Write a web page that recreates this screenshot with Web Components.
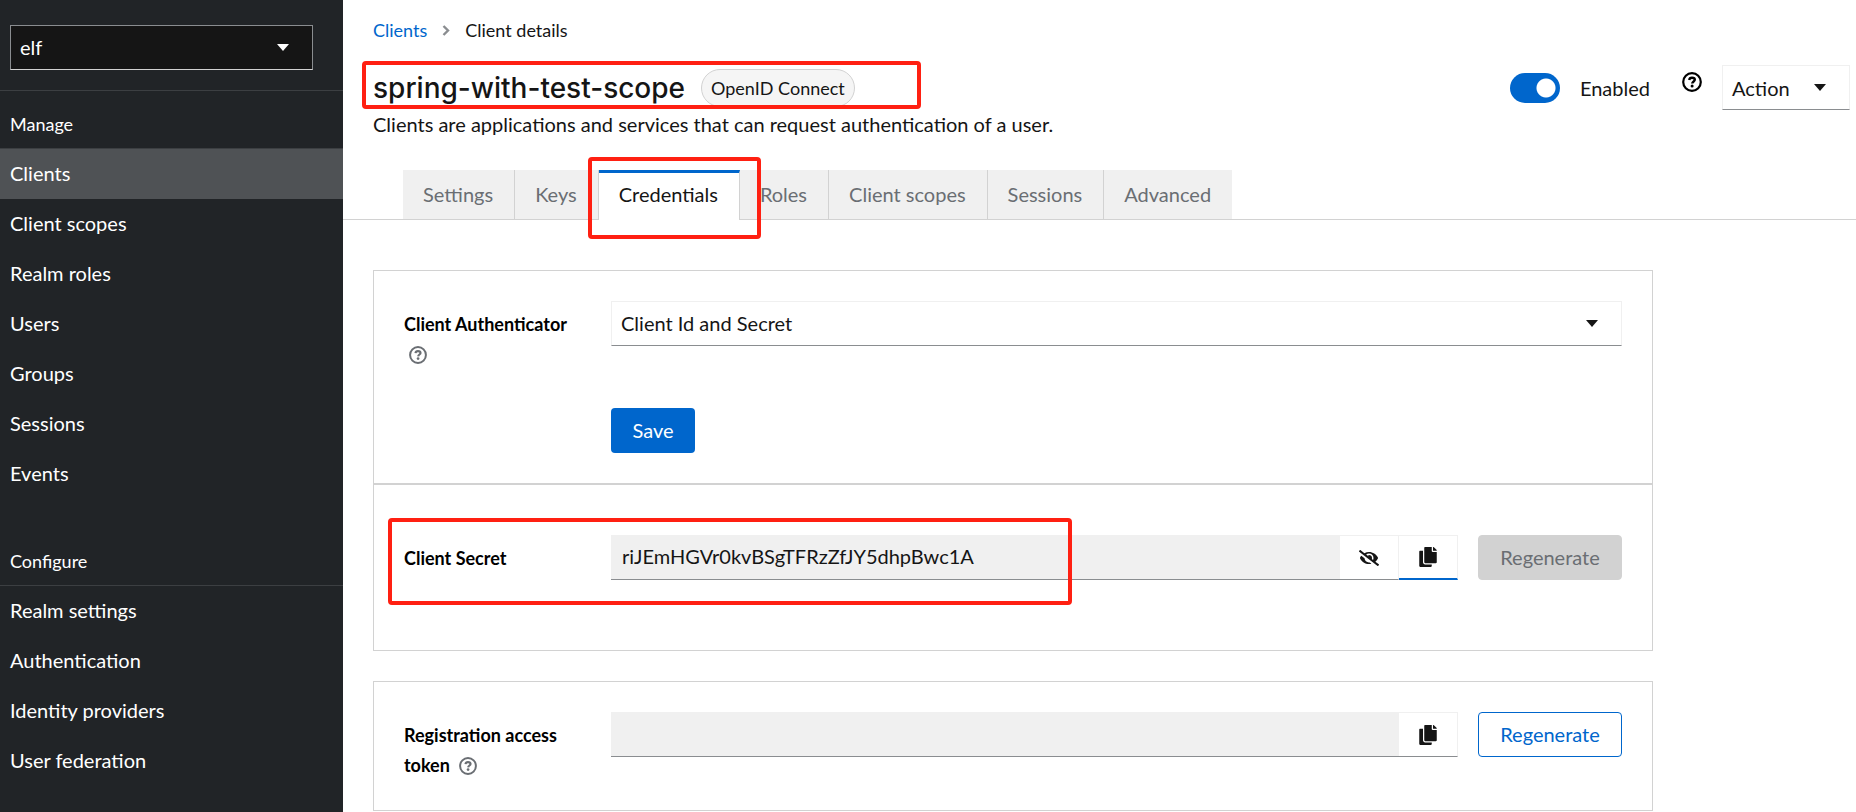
<!DOCTYPE html>
<html lang="en">
<head>
<meta charset="utf-8">
<meta name="viewport" content="width=device-width, initial-scale=1">
<title>Client details</title>
<style>
  body {
    margin: 0;
    background: #fff;
    color: #151515;
    font: 400 20px/30px Lato, "Open Sans", sans-serif;
  }
</style>
</head>
<body>
<admin-app></admin-app>

<template id="t-admin-app">
  <style>
    :host { display: grid; grid-template-columns: 343px minmax(0, 1fr); min-height: 100vh; }
    main { padding-top: 15px; min-width: 0; }
    .panels { padding: 50px 30px 0; max-width: 1280px; }
    .panels detail-card:last-child { margin-top: 30px; }
  </style>
  <admin-sidebar></admin-sidebar>
  <main>
    <client-header></client-header>
    <client-tabs></client-tabs>
    <div class="panels">
      <detail-card><authenticator-form></authenticator-form></detail-card>
      <detail-card roomy>
        <secret-field label="Client Secret" value="riJEmHGVr0kvBSgTFRzZfJY5dhpBwc1A" maskable copied disabled marked></secret-field>
      </detail-card>
      <detail-card>
        <secret-field label="Registration access token" help></secret-field>
      </detail-card>
    </div>
  </main>
</template>

<template id="t-admin-sidebar">
  <style>
    :host { display: block; background: #212427; color: #fff; }
    .realm { padding: 25px 30px 20px 10px; border-bottom: 1px solid #3c3f42; }
    .picker { position: relative; display: block; }
    select {
      appearance: none; display: block; box-sizing: border-box; width: 100%; height: 45px; margin: 0;
      padding: 0 9px 2px; font: inherit; color: #fff; background: #151515;
      border: 1px solid #8a8d90; border-bottom-color: #d2d2d2; border-radius: 0;
    }
    ui-icon { position: absolute; right: 24px; top: 19px; pointer-events: none; }
  </style>
  <div class="realm">
    <div class="picker">
      <select aria-label="Realm"><option>elf</option></select>
      <ui-icon name="caret"></ui-icon>
    </div>
  </div>
  <nav-section heading="Manage" items="Clients|Client scopes|Realm roles|Users|Groups|Sessions|Events" current="Clients"></nav-section>
  <nav-section heading="Configure" items="Realm settings|Authentication|Identity providers|User federation" spaced></nav-section>
</template>

<template id="t-nav-section">
  <style>
    :host { display: block; }
    :host([spaced]) { padding-top: 29px; }
    h2 {
      margin: 0; padding: 18px 10px 9px; font-size: 18px; line-height: 30px; font-weight: 400;
      border-bottom: 1px solid #3c3f42;
    }
    ul { list-style: none; margin: 0; padding: 0; }
    a { display: block; padding: 9px 10px 11px; color: #fff; text-decoration: none; }
    a[aria-current] { background: #4f5255; }
  </style>
  <h2></h2>
  <ul></ul>
</template>

<template id="t-client-header">
  <style>
    :host { display: block; padding: 0 6px 0 30px; }
    nav { display: flex; align-items: center; font-size: 18px; line-height: 30px; color: #151515; }
    nav a { color: #06c; text-decoration: none; }
    nav ui-icon { margin: 0 15px; }
    .top { display: flex; align-items: center; height: 45px; margin-top: 20px; }
    .title { position: relative; display: flex; align-items: center; gap: 16px; }
    h1 { margin: 0; font: 500 28px/36px Inter, Lato, sans-serif; }
    .chip {
      box-sizing: border-box; height: 38px; padding: 0 9px; font-size: 18px; line-height: 36px;
      border: 1px solid #d2d2d2; border-radius: 19px; background: #f5f5f5;
    }
    .tools { display: flex; align-items: center; margin-left: auto; }
    .switch { display: flex; align-items: center; gap: 20px; }
    .switch input {
      appearance: none; margin: 0; width: 50px; height: 30px; border-radius: 15px;
      background: radial-gradient(circle at 36px 15px, #fff 9px, transparent 10px) #06c;
    }
    .help { display: flex; margin: 0 20px 12px 32px; padding: 0; border: 0; background: none; color: #000; }
    .action {
      display: flex; align-items: center; justify-content: space-between; box-sizing: border-box;
      width: 128px; height: 45px; padding: 0 23px 0 9px; font: inherit; color: #151515;
      background: #fff; border: 1px solid #f0f0f0; border-bottom-color: #8a8d90;
    }
    p { margin: 0; line-height: 28px; }
  </style>
  <nav aria-label="Breadcrumb"><a href="#clients">Clients</a><ui-icon name="chevron"></ui-icon><span>Client details</span></nav>
  <div class="top">
    <div class="title">
      <h1>spring-with-test-scope</h1><span class="chip">OpenID Connect</span>
      <red-frame style="inset: -8px -66px -2px -11px"></red-frame>
    </div>
    <div class="tools">
      <label class="switch"><input type="checkbox" role="switch" checked>Enabled</label>
      <button class="help" type="button" aria-label="Help for enabled"><ui-icon name="help" large></ui-icon></button>
      <button class="action" type="button">Action<ui-icon name="caret"></ui-icon></button>
    </div>
  </div>
  <p>Clients are applications and services that can request authentication of a user.</p>
</template>

<template id="t-client-tabs">
  <style>
    :host { display: block; margin-top: 32px; padding-left: 60px; border-bottom: 1px solid #d2d2d2; }
    ul { display: flex; list-style: none; margin: 0; padding: 0; }
    li { position: relative; }
    a {
      display: block; box-sizing: border-box; height: 49px; padding: 9px 21px 10px 20px; color: #6a6e73;
      background: #f0f0f0; border-right: 1px solid #d2d2d2; text-decoration: none;
    }
    li:last-child a { border-right: 0; }
    a[aria-current] {
      height: 50px; margin-bottom: -1px; padding-top: 6px; color: #151515; background: #fff;
      border-top: 3px solid #06c;
    }
    li:has([aria-current]) { z-index: 1; }
  </style>
  <ul>
    <li><a href="#settings">Settings</a></li>
    <li><a href="#keys">Keys</a></li>
    <li><a href="#credentials" aria-current="page">Credentials</a><red-frame style="inset: -13px -21px -20px -11px"></red-frame></li>
    <li><a href="#roles">Roles</a></li>
    <li><a href="#scopes">Client scopes</a></li>
    <li><a href="#sessions">Sessions</a></li>
    <li><a href="#advanced">Advanced</a></li>
  </ul>
</template>

<template id="t-detail-card">
  <style>
    :host { display: block; padding: 30px; border: 1px solid #d2d2d2; background: #fff; }
    :host([roomy]) { padding: 50px 30px 47px; }
  </style>
  <slot></slot>
</template>

<template id="t-authenticator-form">
  <style>
    :host { display: block; }
    form { display: grid; grid-template-columns: 177px minmax(0, 1fr); column-gap: 30px; row-gap: 39px; }
    .label { padding-top: 8px; font-size: 18px; font-weight: 700; color: #000; }
    .label button { display: inline-flex; margin: 0 5px; padding: 0 0 2px; border: 0; background: none; color: #6a6e73; vertical-align: middle; }
    .picker { position: relative; }
    select {
      appearance: none; display: block; box-sizing: border-box; width: 100%; height: 45px; margin: 0;
      padding: 0 9px 2px; font: inherit; color: #151515; background: #fff;
      border: 1px solid #f0f0f0; border-bottom-color: #8a8d90; border-radius: 0;
    }
    .picker ui-icon { position: absolute; right: 24px; top: 19px; pointer-events: none; }
    .save {
      grid-column: 2; justify-self: start; width: 84px; height: 45px; padding: 0 0 2px; font: inherit;
      color: #fff; background: #06c; border: 0; border-radius: 4px;
    }
  </style>
  <form>
    <div class="label"><label for="auth">Client Authenticator</label> <button type="button" aria-label="Help"><ui-icon name="help"></ui-icon></button></div>
    <div class="picker">
      <select id="auth"><option>Client Id and Secret</option></select>
      <ui-icon name="caret"></ui-icon>
    </div>
    <button class="save" type="button">Save</button>
  </form>
</template>

<template id="t-secret-field">
  <style>
    :host { display: grid; grid-template-columns: 177px minmax(0, 1fr) 144px; column-gap: 30px; position: relative; }
    .label { padding-top: 8px; min-height: 60px; font-size: 18px; font-weight: 700; color: #000; }
    .label button { display: inline-flex; margin: 0 5px; padding: 0 0 2px; border: 0; background: none; color: #6a6e73; vertical-align: middle; }
    .group { display: flex; height: 45px; margin-right: -10px; }
    input {
      flex: 1; min-width: 0; box-sizing: border-box; margin: 0; padding: 0 11px 2px; font: inherit;
      color: #151515; background: #f0f0f0; border: 0; border-bottom: 1px solid #8a8d90; border-radius: 0;
    }
    .group button {
      display: flex; align-items: center; justify-content: center; box-sizing: border-box; width: 59px;
      padding: 0; color: #151515; background: #fff; border: 1px solid #f0f0f0; border-left: 0;
      border-bottom-color: #8a8d90;
    }
    .group button.copied { border-bottom: 2px solid #06c; }
    .regenerate {
      box-sizing: border-box; height: 45px; padding: 0 0 2px; font: inherit; color: #06c; background: #fff;
      border: 1px solid #06c; border-radius: 4px;
    }
    .regenerate:disabled { color: #6a6e73; background: #d2d2d2; border-color: #d2d2d2; }
  </style>
  <div class="label"><label for="value"></label></div>
  <div class="group"><input id="value" type="text" readonly></div>
  <button class="regenerate" type="button">Regenerate</button>
</template>

<template id="t-red-frame">
  <style>
    :host { position: absolute; z-index: 2; border: 4px solid #ff2012; border-radius: 4px; pointer-events: none; }
  </style>
</template>

<script>
  const ICONS = {
    caret: [12, 7, '<path d="M0 0h12L6 7z" fill="currentColor"/>', '0 0 12 7'],
    chevron: [8, 11, '<path d="M1.5 1l4.5 4.5L1.5 10" fill="none" stroke="#8a8d90" stroke-width="2.4"/>', '0 0 8 11'],
    help: [18, 18, '<circle cx="10" cy="10" r="8.8" fill="none" stroke="currentColor" stroke-width="2.2"/><path d="M7.2 8C7.4 6.3 8.5 5.7 10 5.7c1.6 0 2.8.8 2.8 2.1 0 1.6-2.4 1.7-2.6 3.7" fill="none" stroke="currentColor" stroke-width="2.4"/><circle cx="10.1" cy="14" r="1.5" fill="currentColor"/>', '0 0 20 20'],
    copy: [18, 20, '<path fill="currentColor" d="M320 448v40c0 13.255-10.745 24-24 24H24c-13.255 0-24-10.745-24-24V120c0-13.255 10.745-24 24-24h72v296c0 30.879 25.121 56 56 56h168zm0-344V0H152c-13.255 0-24 10.745-24 24v368c0 13.255 10.745 24 24 24h272c13.255 0 24-10.745 24-24V128H344c-13.2 0-24-10.8-24-24zm120.971-31.029L375.029 7.029A24 24 0 0 0 358.059 0H352v96h96v-6.059a24 24 0 0 0-7.029-16.97z"/>', '0 0 448 512'],
    hide: [20, 16, '<path fill="currentColor" d="M320 400c-75.85 0-137.25-58.71-142.9-133.11L72.2 185.82c-13.79 17.3-26.48 35.59-36.72 55.59a32.35 32.35 0 0 0 0 29.19C89.71 376.41 197.07 448 320 448c26.91 0 52.87-4 77.89-10.46L346 397.39a144.13 144.13 0 0 1-26 2.61zm313.82 58.1l-110.55-85.44a331.25 331.25 0 0 0 81.25-102.07 32.35 32.35 0 0 0 0-29.19C550.29 135.59 442.93 64 320 64a308.15 308.15 0 0 0-147.32 37.7L45.46 3.37A16 16 0 0 0 23 6.18L3.37 31.45A16 16 0 0 0 6.18 53.9l588.36 454.73a16 16 0 0 0 22.46-2.81l19.64-25.27a16 16 0 0 0-2.82-22.45zm-183.72-142l-39.3-30.38A94.75 94.75 0 0 0 416 256a94.76 94.76 0 0 0-121.31-92.21A47.65 47.65 0 0 1 304 192a46.64 46.64 0 0 1-1.54 10l-73.61-56.89A142.31 142.31 0 0 1 320 112a143.92 143.92 0 0 1 144 144c0 21.63-5.29 41.79-13.9 60.11z"/>', '0 0 640 512'],
  };

  class UiIcon extends HTMLElement {
    constructor() { super(); this.attachShadow({ mode: 'open' }); }
    connectedCallback() {
      const [w, h, body, box] = ICONS[this.getAttribute('name')];
      const grow = this.hasAttribute('large') ? 2 : 0;
      this.shadowRoot.innerHTML = `<style>:host { display: inline-flex; } svg { display: block; }</style>
        <svg width="${w + grow}" height="${h + grow}" viewBox="${box}" aria-hidden="true">${body}</svg>`;
    }
  }
  customElements.define('ui-icon', UiIcon);

  /* Base class: clones the template named after the tag into the shadow root. */
  class TemplateElement extends HTMLElement {
    constructor() {
      super();
      const template = document.getElementById('t-' + this.localName);
      this.attachShadow({ mode: 'open' }).append(template.content.cloneNode(true));
    }
  }

  class NavSection extends TemplateElement {
    connectedCallback() {
      this.shadowRoot.querySelector('h2').textContent = this.getAttribute('heading');
      const list = this.shadowRoot.querySelector('ul');
      list.replaceChildren(...this.getAttribute('items').split('|').map(text => {
        const item = document.createElement('li');
        const link = document.createElement('a');
        link.href = '#' + text.toLowerCase().replace(/ /g, '-');
        link.textContent = text;
        if (text === this.getAttribute('current')) link.setAttribute('aria-current', 'page');
        item.append(link);
        return item;
      }));
    }
  }

  class SecretField extends TemplateElement {
    connectedCallback() {
      const root = this.shadowRoot;
      const group = root.querySelector('.group');
      root.querySelector('label').textContent = this.getAttribute('label');
      root.querySelector('input').value = this.getAttribute('value') || '';
      root.querySelector('.regenerate').disabled = this.hasAttribute('disabled');
      if (this.hasAttribute('help'))
        root.querySelector('.label').insertAdjacentHTML('beforeend', ' <button type="button" aria-label="Help"><ui-icon name="help"></ui-icon></button>');
      if (this.hasAttribute('maskable'))
        group.insertAdjacentHTML('beforeend', '<button type="button" aria-label="Hide secret"><ui-icon name="hide"></ui-icon></button>');
      group.insertAdjacentHTML('beforeend', `<button type="button" aria-label="Copy" class="${this.hasAttribute('copied') ? 'copied' : ''}"><ui-icon name="copy"></ui-icon></button>`);
      if (this.hasAttribute('marked'))
        root.append(Object.assign(document.createElement('red-frame'), { style: 'left: -16px; width: 676px; top: -17px; height: 79px' }));
    }
  }

  customElements.define('red-frame', class extends TemplateElement {});
  customElements.define('nav-section', NavSection);
  customElements.define('secret-field', SecretField);
  for (const tag of ['detail-card', 'authenticator-form', 'client-tabs', 'client-header', 'admin-sidebar', 'admin-app'])
    customElements.define(tag, class extends TemplateElement {});
</script>
</body>
</html>
